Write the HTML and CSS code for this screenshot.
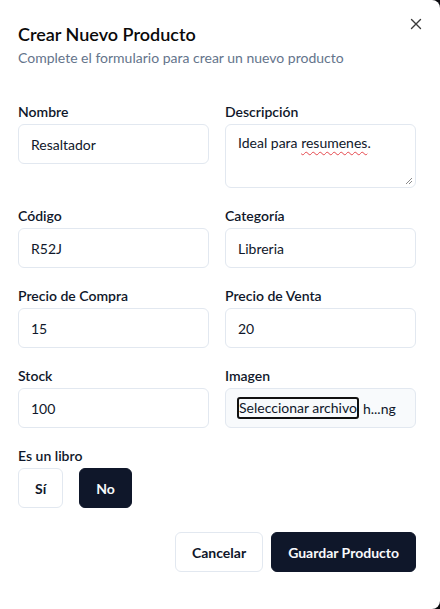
FILE: index.html
```html
<!DOCTYPE html>
<html lang="es">
<head>
<meta charset="utf-8">
<title>Crear Nuevo Producto</title>
<link rel="stylesheet" href="styles.css">
</head>
<body>
<div class="dialog">
  <button class="close" aria-label="Cerrar">
    <svg width="12" height="12" viewBox="0 0 12 12"><path d="M1.5 1.5 L10.5 10.5 M10.5 1.5 L1.5 10.5" stroke="#3a3a3a" stroke-width="1.4" stroke-linecap="round" fill="none"/></svg>
  </button>
  <header class="head">
    <h2 class="title">Crear Nuevo Producto</h2>
    <p class="subtitle">Complete el formulario para crear un nuevo producto</p>
  </header>
  <form class="grid">
    <div class="field">
      <label class="label">Nombre</label>
      <input class="input" type="text" value="Resaltador">
    </div>
    <div class="field">
      <label class="label">Descripción</label>
      <div class="textarea">Ideal para <span class="spell">resumenes</span>.<svg class="grip" width="8" height="8" viewBox="0 0 8 8"><path d="M7 1 L1 7 M7 4 L4 7" stroke="#8a8a8a" stroke-width="1" fill="none"/></svg></div>
    </div>
    <div class="field">
      <label class="label">Código</label>
      <input class="input" type="text" value="R52J">
    </div>
    <div class="field">
      <label class="label">Categoría</label>
      <input class="input" type="text" value="Libreria">
    </div>
    <div class="field">
      <label class="label">Precio de Compra</label>
      <input class="input" type="text" value="15">
    </div>
    <div class="field">
      <label class="label">Precio de Venta</label>
      <input class="input" type="text" value="20">
    </div>
    <div class="field">
      <label class="label">Stock</label>
      <input class="input" type="text" value="100">
    </div>
    <div class="field">
      <label class="label">Imagen</label>
      <div class="file"><span class="file-btn">Seleccionar archivo</span><span class="file-name">h...ng</span></div>
    </div>
    <div class="field full">
      <label class="label">Es un libro</label>
      <div class="toggle">
        <button type="button" class="btn outline">Sí</button>
        <button type="button" class="btn dark">No</button>
      </div>
    </div>
  </form>
  <footer class="foot">
    <button type="button" class="btn outline">Cancelar</button>
    <button type="button" class="btn dark">Guardar Producto</button>
  </footer>
</div>
</body>
</html>
```
FILE: styles.css
```css
* { box-sizing: border-box; }
html, body { margin: 0; padding: 0; }
body {
  background: #0b0b0f;
  font-family: Lato, "Noto Sans", sans-serif;
  color: #0f172a;
}
.dialog {
  position: relative;
  width: 440px;
  height: 609px;
  background: #ffffff;
  border-top-right-radius: 8px;
  border-bottom-right-radius: 8px;
  padding: 22px 24px 0 18px;
}
.close {
  position: absolute;
  top: 18px;
  right: 18px;
  width: 12px;
  height: 12px;
  padding: 0;
  border: 0;
  background: none;
  display: flex;
}
.head { display: flex; flex-direction: column; gap: 2px; }
.title {
  margin: 0;
  font-size: 18px;
  line-height: 24px;
  font-weight: 600;
  color: #0a0a0a;
}
.subtitle {
  margin: 0;
  font-size: 14px;
  line-height: 20px;
  color: #64748b;
}
.grid {
  margin: 34px 0 0;
  display: grid;
  grid-template-columns: 1fr 1fr;
  column-gap: 16px;
  row-gap: 18px;
}
.field { display: flex; flex-direction: column; gap: 2px; }
.full { grid-column: 1 / -1; }
.label {
  font-size: 14px;
  line-height: 20px;
  font-weight: 600;
  color: #0f172a;
}
.input, .textarea, .file {
  height: 40px;
  border: 1px solid #e2e8f0;
  border-radius: 6px;
  padding: 0 12px;
  font: inherit;
  font-size: 14px;
  color: #0f172a;
  background: #fff;
  outline: none;
  width: 100%;
}
.textarea {
  position: relative;
  height: 64px;
  padding: 8px 12px;
  line-height: 20px;
}
.spell {
  text-decoration: underline wavy #e5484d;
  text-decoration-thickness: 1px;
  text-underline-offset: 3px;
}
.grip { position: absolute; right: 2px; bottom: 2px; }
.file {
  display: flex;
  align-items: center;
  background: #f8fafc;
  padding: 0 11px;
  gap: 4px;
}
.file-btn {
  border: 2px solid #111;
  border-radius: 3px;
  line-height: 18px;
  padding: 0 0 0 0;
  color: #0f172a;
  white-space: nowrap;
}
.file-name { color: #0f172a; white-space: nowrap; }
.toggle { display: flex; gap: 16px; }
.btn {
  height: 40px;
  padding: 0 16px;
  border-radius: 6px;
  font: inherit;
  font-size: 14px;
  font-weight: 700;
  cursor: pointer;
}
.outline { background: #fff; border: 1px solid #e2e8f0; color: #0f172a; }
.dark { background: #0f172a; border: 1px solid #0f172a; color: #f8fafc; }
.foot {
  display: flex;
  justify-content: flex-end;
  gap: 8px;
  margin-top: 24px;
}
```
